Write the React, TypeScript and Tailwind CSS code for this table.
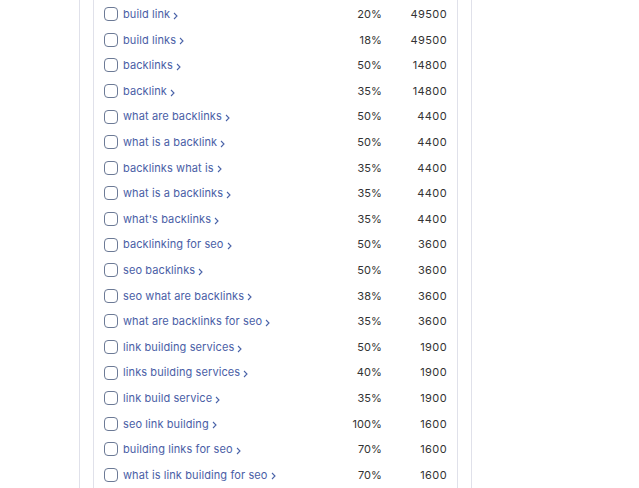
const rows: [string, string, string][] = [
  ["build link", "20%", "49500"],
  ["build links", "18%", "49500"],
  ["backlinks", "50%", "14800"],
  ["backlink", "35%", "14800"],
  ["what are backlinks", "50%", "4400"],
  ["what is a backlink", "50%", "4400"],
  ["backlinks what is", "35%", "4400"],
  ["what is a backlinks", "35%", "4400"],
  ["what's backlinks", "35%", "4400"],
  ["backlinking for seo", "50%", "3600"],
  ["seo backlinks", "50%", "3600"],
  ["seo what are backlinks", "38%", "3600"],
  ["what are backlinks for seo", "35%", "3600"],
  ["link building services", "50%", "1900"],
  ["links building services", "40%", "1900"],
  ["link build service", "35%", "1900"],
  ["seo link building", "100%", "1600"],
  ["building links for seo", "70%", "1600"],
  ["what is link building for seo", "70%", "1600"],
];

function Chevron() {
  return (
    <svg width="5" height="8" viewBox="0 0 5 8" className="ml-[3px] mt-[3px] shrink-0">
      <path d="M1 1l3 3-3 3" fill="none" stroke="#4a63a8" strokeWidth="1.1" />
    </svg>
  );
}

export default function App() {
  return (
    <div className="h-[488px] w-[639px] overflow-hidden bg-white" style={{ fontFamily: "Inter, 'Noto Sans', sans-serif" }}>
      <div className="ml-[79px] h-full w-[393px] border-x border-[#e0e1ea] px-[13px]">
        <div className="h-full border-x border-[#e0e1ea] pt-[1.5px]">
          {rows.map(([kw, pct, vol]) => (
            <div key={kw} className="flex h-[25.6px] items-center pl-[10px] pr-[10px] text-[11px] tracking-[0.1px]">
              <span className="h-[14px] w-[14px] shrink-0 rounded-[4px] border border-[#6c7a96]" />
              <span className="ml-[5px] flex flex-1 items-center text-[#4a5ea6]">
                {kw}
                <Chevron />
              </span>
              <span className="w-[60px] text-right text-[#333]">{pct}</span>
              <span className="w-[65px] text-right text-[#333] tracking-[0.4px]">{vol}</span>
            </div>
          ))}
        </div>
      </div>
    </div>
  );
}
